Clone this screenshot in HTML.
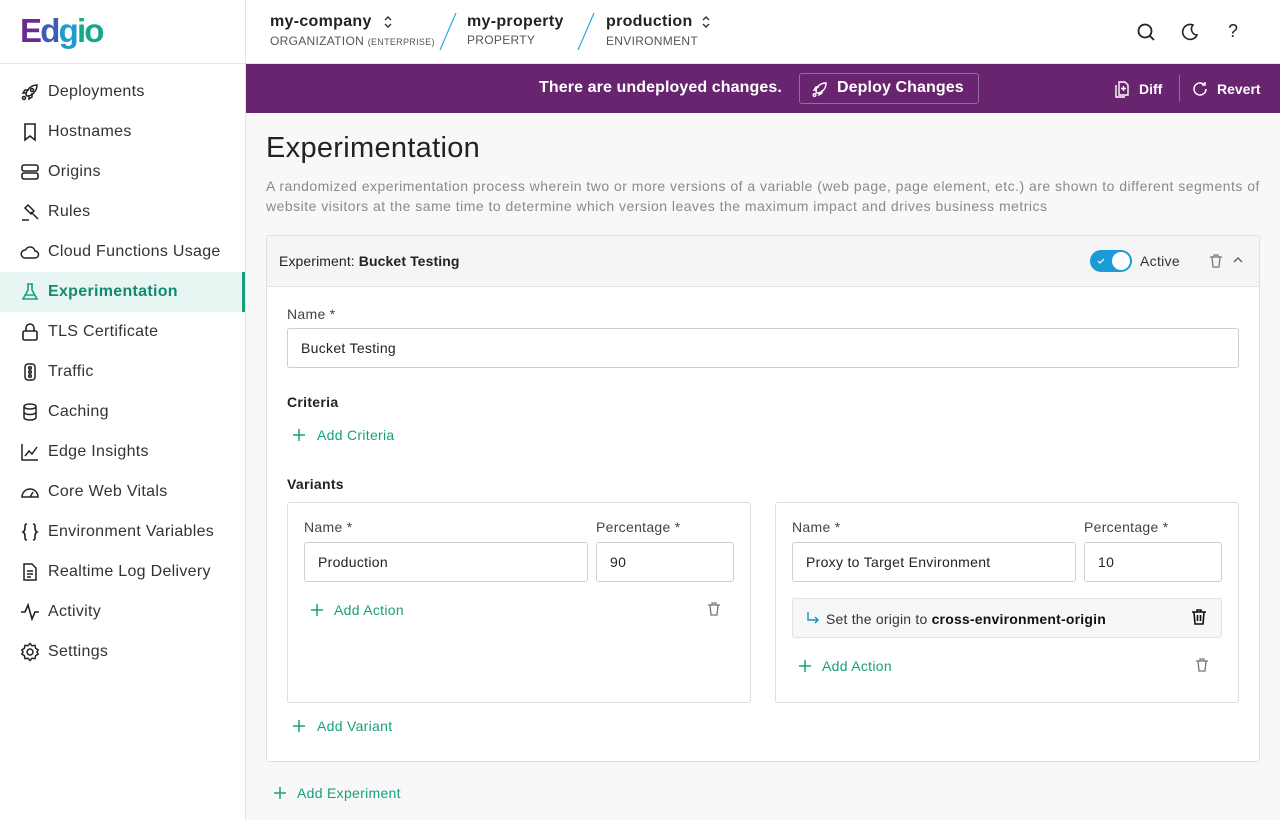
<!DOCTYPE html><html><head><style>
*{box-sizing:border-box;margin:0;padding:0}
body{width:1280px;height:820px;overflow:hidden;font-family:"Liberation Sans",sans-serif;color:#222;background:#f8f8f8;position:relative;letter-spacing:0.3px}
.a{position:absolute}
.side{left:0;top:0;width:246px;height:820px;background:#fff;border-right:1px solid #e4e4e4}
.hdr{left:246px;top:0;width:1034px;height:64px;background:#fff;border-bottom:1px solid #e6e6e6}
.logoline{left:0;top:63px;width:246px;height:1px;background:#e6e6e6}
.nav{left:0;width:245px;height:40px;font-size:16px;color:#333}
.nav svg{position:absolute;left:20px;top:10px}
.nav span{position:absolute;left:48px;top:11px}
.act{background:#e8f6f3;color:#138a6e;font-weight:bold}
.act:after{content:"";position:absolute;right:0;top:0;width:3px;height:40px;background:#17a07e}
.purple{left:246px;top:64px;width:1034px;height:49px;background:#68246f}
.lbl{font-size:14px;color:#444}
.inp{background:#fff;border:1px solid #cfcfcf;border-radius:3px;font-size:14px;color:#222;padding:0 13px;display:flex;align-items:center}
.grn{color:#17a07e;font-size:14px}
.pl{position:absolute}
</style></head><body>
<div class="a side"></div>
<div class="a logoline"></div>
<div class="a" style="left:20px;top:12px;font-size:33px;font-weight:bold;letter-spacing:-1.8px"><span style="color:#6b2a8f">E</span><span style="color:#3f5bb8">d</span><span style="color:#1e9bd0">g</span><span style="color:#15a88a">io</span></div>
<div class="a hdr"></div>
<div class="a" style="left:270px;top:13px;font-size:16px;font-weight:bold">my-company</div>
<div class="a" style="left:270px;top:34px;font-size:12px;color:#555">ORGANIZATION <span style="font-size:9px">(ENTERPRISE)</span></div>
<svg class="a" style="left:436px;top:12px" width="24" height="40"><line x1="20" y1="1" x2="4" y2="38" stroke="#2aa8e0" stroke-width="1.2"/></svg>
<div class="a" style="left:467px;top:13px;font-size:16px;font-weight:bold">my-property</div>
<div class="a" style="left:467px;top:33px;font-size:12px;color:#555">PROPERTY</div>
<svg class="a" style="left:574px;top:12px" width="24" height="40"><line x1="20" y1="1" x2="4" y2="38" stroke="#2aa8e0" stroke-width="1.2"/></svg>
<div class="a" style="left:606px;top:13px;font-size:16px;font-weight:bold">production</div>
<div class="a" style="left:606px;top:34px;font-size:12px;color:#555">ENVIRONMENT</div>
<svg class="a" style="left:382px;top:14px" width="12" height="16"><path d="M3 6l3-3 3 3M3 10l3 3 3-3" fill="none" stroke="#333" stroke-width="1.4"/></svg>
<svg class="a" style="left:700px;top:14px" width="12" height="16"><path d="M3 6l3-3 3 3M3 10l3 3 3-3" fill="none" stroke="#333" stroke-width="1.4"/></svg>
<svg class="a" style="left:1136px;top:22px" width="20" height="20"><circle cx="9" cy="9" r="6.5" fill="none" stroke="#222" stroke-width="1.8"/><line x1="13.5" y1="13.5" x2="18" y2="18" stroke="#222" stroke-width="1.8"/></svg>
<svg class="a" style="left:1180px;top:22px" width="20" height="20"><path d="M13 3a7.5 7.5 0 1 0 4 10A6 6 0 0 1 13 3z" fill="none" stroke="#222" stroke-width="1.6"/></svg>
<div class="a" style="left:1228px;top:21px;font-size:18px;color:#222">?</div>

<div class="a nav" style="top:72px"><svg width="20" height="20" fill="none" stroke="#222" stroke-width="1.5"><path d="M6 13c0-5 5-10 11-10 0 6-5 11-10 11zM9 8H5l-2 3h4M12 11v4l-3 2v-4"/><circle cx="4" cy="16" r="1.5"/><circle cx="12" cy="8" r="1.5"/></svg><span>Deployments</span></div>
<div class="a nav" style="top:112px"><svg width="20" height="20" fill="none" stroke="#222" stroke-width="1.6"><path d="M5 2h10v16l-5-4-5 4z"/></svg><span>Hostnames</span></div>
<div class="a nav" style="top:152px"><svg width="20" height="20" fill="none" stroke="#222" stroke-width="1.6"><rect x="2" y="3" width="16" height="6" rx="2"/><rect x="2" y="11" width="16" height="6" rx="2"/></svg><span>Origins</span></div>
<div class="a nav" style="top:192px"><svg width="20" height="20" fill="none" stroke="#222" stroke-width="1.5"><path d="M8 3l6 6-3 3-6-6zM11 10l7 7M2 18h7"/></svg><span>Rules</span></div>
<div class="a nav" style="top:232px"><svg width="20" height="20" fill="none" stroke="#222" stroke-width="1.5"><path d="M5 16h10a3.5 3.5 0 0 0 0-7 5 5 0 0 0-9.5-1A4 4 0 0 0 5 16z"/></svg><span>Cloud Functions Usage</span></div>
<div class="a nav act" style="top:272px"><svg width="20" height="20" fill="none" stroke="#17a07e" stroke-width="1.6"><path d="M7 2h6M8 2v6l-5 9h14l-5-9V2M5 13h10"/></svg><span>Experimentation</span></div>
<div class="a nav" style="top:312px"><svg width="20" height="20" fill="none" stroke="#222" stroke-width="1.6"><rect x="3" y="9" width="14" height="9" rx="1.5"/><path d="M6 9V6a4 4 0 0 1 8 0v3"/></svg><span>TLS Certificate</span></div>
<div class="a nav" style="top:352px"><svg width="20" height="20" fill="none" stroke="#222" stroke-width="1.5"><rect x="5" y="2" width="10" height="16" rx="3"/><circle cx="10" cy="6" r="1.3"/><circle cx="10" cy="10" r="1.3"/><circle cx="10" cy="14" r="1.3"/></svg><span>Traffic</span></div>
<div class="a nav" style="top:392px"><svg width="20" height="20" fill="none" stroke="#222" stroke-width="1.5"><ellipse cx="10" cy="4.5" rx="6" ry="2.5"/><path d="M4 4.5v11c0 1.4 2.7 2.5 6 2.5s6-1.1 6-2.5v-11M4 10c0 1.4 2.7 2.5 6 2.5s6-1.1 6-2.5"/></svg><span>Caching</span></div>
<div class="a nav" style="top:432px"><svg width="20" height="20" fill="none" stroke="#222" stroke-width="1.5"><path d="M2 2v16h16M5 14l4-5 3 3 5-7"/></svg><span>Edge Insights</span></div>
<div class="a nav" style="top:472px"><svg width="20" height="20" fill="none" stroke="#222" stroke-width="1.5"><path d="M2 15a8 8 0 0 1 16 0zM10 15l3-5"/></svg><span>Core Web Vitals</span></div>
<div class="a nav" style="top:512px"><svg width="20" height="20" fill="none" stroke="#222" stroke-width="1.6"><path d="M7 2c-2 0-2 1-2 3s0 4-2 5c2 1 2 3 2 5s0 3 2 3M13 2c2 0 2 1 2 3s0 4 2 5c-2 1-2 3-2 5s0 3-2 3"/></svg><span>Environment Variables</span></div>
<div class="a nav" style="top:552px"><svg width="20" height="20" fill="none" stroke="#222" stroke-width="1.5"><path d="M4 2h8l4 4v12H4zM7 9h6M7 12h6M7 15h4"/></svg><span>Realtime Log Delivery</span></div>
<div class="a nav" style="top:592px"><svg width="20" height="20" fill="none" stroke="#222" stroke-width="1.6"><path d="M1 10h4l3-7 4 14 3-7h4"/></svg><span>Activity</span></div>
<div class="a nav" style="top:632px"><svg width="20" height="20" fill="none" stroke="#222" stroke-width="1.5"><circle cx="10" cy="10" r="3"/><path d="M10 1.5l2 2.2 3-.4.6 3 2.6 1.7-1.3 2 1.3 2-2.6 1.7-.6 3-3-.4-2 2.2-2-2.2-3 .4-.6-3L1.8 12l1.3-2-1.3-2 2.6-1.7.6-3 3 .4z"/></svg><span>Settings</span></div>

<div class="a purple"></div>
<div class="a" style="left:539px;top:79px;font-size:16px;font-weight:bold;color:#fff;letter-spacing:0.1px">There are undeployed changes.</div>
<div class="a" style="left:799px;top:73px;width:180px;height:31px;border:1px solid #9a6aa0;border-radius:3px"></div>
<svg class="a" style="left:811px;top:80px" width="18" height="18" fill="none" stroke="#fff" stroke-width="1.4"><path d="M5 12c0-5 4-9 10-9 0 6-4 10-9 10zM8 7H5l-2 3h3M11 10v3l-3 2v-3"/><circle cx="3.5" cy="15" r="1.3"/></svg>
<div class="a" style="left:837px;top:79px;font-size:16px;font-weight:bold;color:#fff;letter-spacing:0.1px">Deploy Changes</div>
<svg class="a" style="left:1113px;top:80px" width="18" height="18" fill="none" stroke="#fff" stroke-width="1.4"><path d="M6 2h6l3 3v10H6zM3 5v12h9M10.5 6v5M8 8.5h5"/></svg>
<div class="a" style="left:1139px;top:81px;font-size:14px;font-weight:bold;color:#fff;letter-spacing:0">Diff</div>
<div class="a" style="left:1179px;top:75px;width:1px;height:27px;background:#9a6aa0"></div>
<svg class="a" style="left:1191px;top:80px" width="18" height="18" fill="none" stroke="#fff" stroke-width="1.5"><path d="M15 9a6 6 0 1 1-2-4.5M14 2v3h-3"/></svg>
<div class="a" style="left:1217px;top:81px;font-size:14px;font-weight:bold;color:#fff;letter-spacing:0">Revert</div>

<div class="a" style="left:266px;top:132px;font-size:29px;color:#222">Experimentation</div>
<div class="a" style="left:266px;top:176px;width:1000px;font-size:14px;line-height:20px;color:#8a8a8a;letter-spacing:0.48px">A randomized experimentation process wherein two or more versions of a variable (web page, page element, etc.) are shown to different segments of website visitors at the same time to determine which version leaves the maximum impact and drives business metrics</div>

<div class="a" style="left:266px;top:235px;width:994px;height:527px;background:#fff;border:1px solid #e0e0e0;border-radius:3px"></div>
<div class="a" style="left:267px;top:236px;width:992px;height:51px;background:#f5f5f5;border-bottom:1px solid #e3e3e3"></div>
<div class="a" style="left:279px;top:253px;font-size:14px;color:#222;letter-spacing:0.1px">Experiment: <b>Bucket Testing</b></div>
<div class="a" style="left:1090px;top:250px;width:42px;height:22px;border-radius:11px;background:#1a9ad6"></div>
<div class="a" style="left:1112px;top:252px;width:18px;height:18px;border-radius:9px;background:#fff"></div>
<svg class="a" style="left:1096px;top:256px" width="10" height="10"><path d="M2 5l2 2 4-4" fill="none" stroke="#fff" stroke-width="1.2"/></svg>
<div class="a" style="left:1140px;top:253px;font-size:14px;color:#333">Active</div>
<svg class="a" style="left:1208px;top:253px" width="16" height="16" fill="none" stroke="#777" stroke-width="1.3"><path d="M2 4h12M6 4V2h4v2M4 4l1 10h6l1-10"/></svg>
<svg class="a" style="left:1232px;top:255px" width="12" height="10" fill="none" stroke="#666" stroke-width="1.5"><path d="M2 7l4-4 4 4"/></svg>

<div class="a lbl" style="left:287px;top:306px">Name *</div>
<div class="a inp" style="left:287px;top:328px;width:952px;height:40px">Bucket Testing</div>
<div class="a" style="left:287px;top:394px;font-size:14px;font-weight:bold">Criteria</div>
<svg class="pl" style="left:293px;top:429px" width="12" height="12"><path d="M6 0v12M0 6h12" stroke="#17a07e" stroke-width="1.5"/></svg>
<div class="a grn" style="left:317px;top:427px">Add Criteria</div>
<div class="a" style="left:287px;top:476px;font-size:14px;font-weight:bold">Variants</div>

<div class="a" style="left:287px;top:502px;width:464px;height:201px;border:1px solid #ddd;border-radius:3px"></div>
<div class="a lbl" style="left:304px;top:519px">Name *</div>
<div class="a lbl" style="left:596px;top:519px">Percentage *</div>
<div class="a inp" style="left:304px;top:542px;width:284px;height:40px">Production</div>
<div class="a inp" style="left:596px;top:542px;width:138px;height:40px">90</div>
<svg class="pl" style="left:311px;top:604px" width="12" height="12"><path d="M6 0v12M0 6h12" stroke="#17a07e" stroke-width="1.5"/></svg>
<div class="a grn" style="left:334px;top:602px">Add Action</div>
<svg class="a" style="left:706px;top:601px" width="16" height="16" fill="none" stroke="#777" stroke-width="1.3"><path d="M2 4h12M6 4V2h4v2M4 4l1 10h6l1-10"/></svg>

<div class="a" style="left:775px;top:502px;width:464px;height:201px;border:1px solid #ddd;border-radius:3px"></div>
<div class="a lbl" style="left:792px;top:519px">Name *</div>
<div class="a lbl" style="left:1084px;top:519px">Percentage *</div>
<div class="a inp" style="left:792px;top:542px;width:284px;height:40px">Proxy to Target Environment</div>
<div class="a inp" style="left:1084px;top:542px;width:138px;height:40px">10</div>
<div class="a" style="left:792px;top:598px;width:430px;height:40px;background:#f6f8f8;border:1px solid #e0e3e3;border-radius:3px"></div>
<svg class="a" style="left:805px;top:610px" width="16" height="16" fill="none" stroke="#1a8ed0" stroke-width="1.4"><path d="M3 2v8h10M10 7l3 3-3 3"/></svg>
<div class="a" style="left:826px;top:611px;font-size:14px;color:#333;letter-spacing:0.2px">Set the origin to <b style="color:#111">cross-environment-origin</b></div>
<svg class="a" style="left:1190px;top:608px" width="18" height="18" fill="none" stroke="#111" stroke-width="1.6"><path d="M2 4h14M7 4V2h4v2M4 4l1 12h8l1-12M7.5 7v6M10.5 7v6"/></svg>
<svg class="pl" style="left:799px;top:660px" width="12" height="12"><path d="M6 0v12M0 6h12" stroke="#17a07e" stroke-width="1.5"/></svg>
<div class="a grn" style="left:822px;top:658px">Add Action</div>
<svg class="a" style="left:1194px;top:657px" width="16" height="16" fill="none" stroke="#777" stroke-width="1.3"><path d="M2 4h12M6 4V2h4v2M4 4l1 10h6l1-10"/></svg>

<svg class="pl" style="left:293px;top:720px" width="12" height="12"><path d="M6 0v12M0 6h12" stroke="#17a07e" stroke-width="1.5"/></svg>
<div class="a grn" style="left:317px;top:718px">Add Variant</div>
<svg class="pl" style="left:274px;top:787px" width="12" height="12"><path d="M6 0v12M0 6h12" stroke="#17a07e" stroke-width="1.5"/></svg>
<div class="a grn" style="left:297px;top:785px">Add Experiment</div>
</body></html>
